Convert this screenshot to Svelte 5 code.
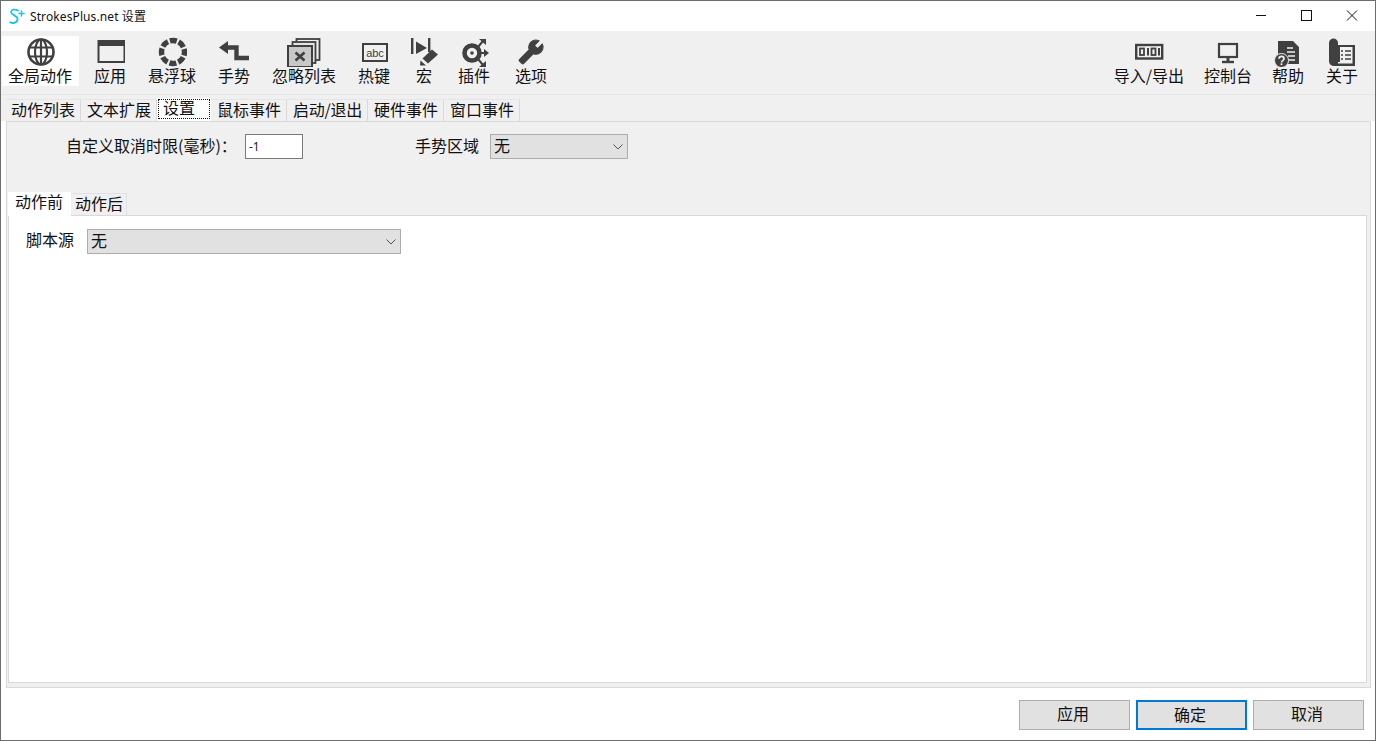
<script>
	const outerTabs = ["动作列表", "文本扩展", "设置", "鼠标事件", "启动/退出", "硬件事件", "窗口事件"];
	const innerTabs = ["动作前", "动作后"];
</script>

<div class="window">
	<header class="titlebar">
		<svg class="logo" width="16" height="17" viewBox="0 0 16 17" fill="none" stroke="#1fc4ea" stroke-width="1.8" stroke-linecap="round">
			<path d="M9 2.500C6 .8 2.200 1.600 2 4.200c-.2 2.600 6.600 3.400 6.600 6.800 0 3.400-4.600 5-7.400 3.200" />
			<path d="M12.500 3v5M10 5.500h5" stroke-width="1.500" />
		</svg>
		<span class="title">StrokesPlus.net 设置</span>
		<div class="winbtns">
			<svg width="46" height="30" viewBox="0 0 46 30" stroke="#111" fill="none"><path d="M19 14.500h10" /></svg>
			<svg width="46" height="30" viewBox="0 0 46 30" stroke="#111" fill="none"><rect x="18.500" y="9.500" width="10" height="10" /></svg>
			<svg width="46" height="30" viewBox="0 0 46 30" stroke="#111" fill="none"><path d="M18 9.500l10 10M28 9.500l-10 10" /></svg>
		</div>
	</header>

	<nav class="toolbar">
		<div class="tool active">
			<svg width="30" height="30" viewBox="-1 0 30 30" fill="none" stroke="#404040">
				<circle cx="15" cy="15" r="12.500" stroke-width="2.600" />
				<ellipse cx="15" cy="15" rx="6" ry="12.500" stroke-width="2.200" />
				<path d="M15 3v24M3 10.500h24M3 19.500h24" stroke-width="2.200" />
			</svg>
			<span>全局动作</span>
		</div>
		<div class="tool">
			<svg width="30" height="30" viewBox="-1 0 30 30" fill="none" stroke="#404040">
				<rect x="2.500" y="4" width="26" height="21" stroke-width="2" />
				<rect x="2" y="3" width="27" height="6" fill="#404040" stroke="none" />
			</svg>
			<span>应用</span>
		</div>
		<div class="tool">
			<svg width="30" height="30" viewBox="-1 0 30 30" fill="none" stroke="#404040">
				<circle cx="15" cy="15" r="11.500" stroke-width="5.400" stroke-dasharray="7 2.030" stroke-dashoffset="3.500" />
			</svg>
			<span>悬浮球</span>
		</div>
		<div class="tool">
			<svg width="32" height="30" viewBox="0 0 32 30" fill="none" stroke="#404040">
				<path d="M7 10.500h11.500V21H31" stroke-width="4.400" />
				<path d="M1 10.500L10 4v13z" fill="#404040" stroke="none" />
			</svg>
			<span>手势</span>
		</div>
		<div class="tool">
			<svg width="36" height="30" viewBox="0 0 36 30" stroke="#404040" stroke-width="1.800" fill="#d0d0d0">
				<rect x="10.500" y="2" width="23" height="21" fill="none" />
				<rect x="6.500" y="5" width="23" height="21" fill="#e4e4e4" />
				<rect x="2" y="9" width="24" height="21" fill="#c8c8c8" stroke-width="2" />
				<path d="M9.500 15.500l9 8M18.500 15.500l-9 8" stroke-width="2.600" />
			</svg>
			<span>忽略列表</span>
		</div>
		<div class="tool">
			<svg width="30" height="30" viewBox="0 0 30 30" fill="none" stroke="#404040">
				<rect x="4" y="7" width="24" height="17" stroke-width="2" />
				<text x="16" y="19.500" text-anchor="middle" class="abc">abc</text>
			</svg>
			<span>热键</span>
		</div>
		<div class="tool macro">
			<svg width="30" height="30" viewBox="0 0 30 30" fill="#404040">
				<rect x="2" y="1" width="2.400" height="16" />
				<path d="M7 4.500L18 11 7 17z" />
				<rect x="19" y="1" width="2.400" height="14" />
				<path d="M23 12.500l6 5-10 9-5.500-5z" />
				<path d="M11.500 23.500l5.500 5H11z" />
			</svg>
			<span>宏</span>
		</div>
		<div class="tool">
			<svg width="30" height="30" viewBox="0 0 30 30" fill="none" stroke="#404040">
				<circle cx="13" cy="16" r="7.500" stroke-width="4.600" />
				<circle cx="13" cy="16" r="1.800" fill="#404040" stroke="none" />
				<path d="M19 10l5-6M22 16h6M19 22l5 6" stroke-width="2" />
				<path d="M20 2h7v6zM25 12l5 4-5 4zM20 30h7v-6z" fill="#404040" stroke="none" />
			</svg>
			<span>插件</span>
		</div>
		<div class="tool options">
			<svg width="26" height="26" viewBox="0 0 24 24" fill="#404040" stroke="#404040" stroke-width="1">
				<path transform="translate(24 0) scale(-1 1)" d="M22.700 19l-9.100-9.100c.9-2.300.4-5-1.500-6.900-2-2-5-2.400-7.400-1.300L9 6 6 9 1.600 4.700C.4 7.100.9 10.100 2.900 12.100c1.900 1.900 4.600 2.400 6.900 1.500l9.100 9.100c.4.400 1 .4 1.400 0l2.300-2.300c.5-.4.5-1.100.1-1.400z" />
			</svg>
			<span>选项</span>
		</div>

		<div class="spacer"></div>

		<div class="tool tight">
			<svg width="32" height="30" viewBox="0 0 32 30" fill="none" stroke="#404040">
				<rect x="3.200" y="8" width="26" height="13.500" stroke-width="2.400" />
				<rect x="7" y="11.500" width="4" height="6.500" stroke-width="1.800" />
				<rect x="14" y="11" width="2" height="7.500" fill="#404040" stroke="none" />
				<rect x="18.500" y="11.500" width="4" height="6.500" stroke-width="1.800" />
				<rect x="25" y="11" width="2" height="7.500" fill="#404040" stroke="none" />
			</svg>
			<span>导入/导出</span>
		</div>
		<div class="tool tight">
			<svg width="30" height="30" viewBox="0 0 30 30" fill="none" stroke="#404040">
				<rect x="6" y="7" width="18" height="13" stroke-width="2.200" />
				<path d="M15 21v4" stroke-width="3" />
				<path d="M9 25h12" stroke-width="2.400" />
			</svg>
			<span>控制台</span>
		</div>
		<div class="tool tight">
			<svg width="30" height="30" viewBox="0 0 30 30" fill="#404040">
				<path d="M5 4h15l6 6v17H12V18H5z" />
				<path d="M14 11h6M14 15h8M15 19h7M15 23h7" stroke="#f0f0f0" stroke-width="1.600" />
				<circle cx="8.500" cy="23.500" r="7" stroke="#f0f0f0" stroke-width="1" />
				<path d="M6 21.800c0-3.200 5-3.200 5 0 0 1.900-2.500 1.800-2.500 3.600" fill="none" stroke="#f0f0f0" stroke-width="1.700" />
				<rect x="7.600" y="26.300" width="1.800" height="1.800" fill="#f0f0f0" />
			</svg>
			<span>帮助</span>
		</div>
		<div class="tool tight last">
			<svg width="30" height="30" viewBox="0 0 30 30" fill="none" stroke="#404040">
				<path d="M2 6c0-6 9-6 9 0v2h17v21H8c-4 0-6-2-6-5z" fill="#404040" stroke="none" />
				<path d="M11 10h15v17H11z" fill="#f0f0f0" stroke="none" />
				<path d="M12 9v16M26.500 9v18.500H8" stroke-width="2" />
				<path d="M14 14h2M18 14h6M14 18h2M18 18h6M14 22h2M18 22h6" stroke-width="1.600" />
			</svg>
			<span>关于</span>
		</div>
	</nav>

	<div class="tabstrip">
		{#each outerTabs as tab}
			<div class="tab" class:selected={tab === "设置"} class:narrow={tab.includes("/")}>
				<span>{tab}</span>
			</div>
		{/each}
	</div>

	<main class="panel">
		<div class="fields">
			<label class="timeout" for="timeout">自定义取消时限(毫秒)：</label>
			<input id="timeout" class="textbox" value="-1" />
			<span class="area-label">手势区域</span>
			<div class="combo small">
				<span>无</span>
				<svg width="10" height="6" viewBox="0 0 10 6" fill="none" stroke="#555"><path d="M.5.500L5 5 9.500.500" /></svg>
			</div>
		</div>

		<div class="subtabs">
			{#each innerTabs as tab}
				<div class="subtab" class:selected={tab === "动作前"}>{tab}</div>
			{/each}
		</div>
		<section class="subpanel">
			<span class="source-label">脚本源</span>
			<div class="combo wide">
				<span>无</span>
				<svg width="10" height="6" viewBox="0 0 10 6" fill="none" stroke="#555"><path d="M.5.500L5 5 9.500.500" /></svg>
			</div>
		</section>
	</main>

	<footer class="footer">
		<button>应用</button>
		<button class="default">确定</button>
		<button>取消</button>
	</footer>
</div>

<style>
	:global(body) {
		margin: 0;
		background: #fff;
	}

	.window {
		box-sizing: border-box;
		display: flex;
		flex-direction: column;
		width: 1376px;
		height: 741px;
		border: 1px solid #6d6d6d;
		background: #fff;
		font-family: "Noto Sans CJK SC", "Noto Sans", sans-serif;
		font-size: 16px;
		color: #111;
		overflow: hidden;
	}

	.titlebar {
		display: flex;
		align-items: center;
		height: 30px;
		flex: none;
		padding-left: 8px;
		background: #fff;
	}

	.logo {
		margin-right: 5px;
	}

	.title {
		font-family: "Noto Sans", "Noto Sans CJK SC", sans-serif;
		font-size: 12px;
		letter-spacing: 0.1px;
	}

	.winbtns {
		display: flex;
		margin-left: auto;
	}

	.toolbar {
		display: flex;
		flex: none;
		box-sizing: border-box;
		height: 64px;
		gap: 8px;
		padding: 5px 0 0 0;
		background: #f0f0f0;
		border-bottom: 1px solid #e4e4e4;
	}

	.tool {
		display: flex;
		flex-direction: column;
		align-items: center;
		height: 50px;
		min-width: 24px;
		padding: 0 7px;
	}

	.tool svg {
		flex: none;
		margin-top: 1px;
	}

	.tool span {
		line-height: 17px;
		white-space: nowrap;
	}

	.tool.active {
		margin-left: 1px;
		padding-left: 6px;
		background: #fff;
	}

	.macro svg {
		margin-left: -3px;
		margin-right: -3px;
	}

	.options {
		margin-left: 3px;
	}

	.tool.options svg {
		margin-top: 3px;
		margin-bottom: 2px;
	}

	.spacer {
		flex: 1;
	}

	.tool.tight {
		padding: 0;
		margin-left: 12px;
	}

	.tool.last {
		margin-left: 14px;
		margin-right: 17px;
	}

	.tabstrip {
		display: flex;
		flex: none;
		align-items: flex-end;
		height: 26px;
		padding-left: 4px;
		background: #f0f0f0;
	}

	.tab {
		box-sizing: border-box;
		height: 22px;
		padding: 0 5px 0 6px;
		line-height: 19px;
		border-right: 1px solid #d9d9d9;
		border-top: 1px solid #e6e6e6;
		white-space: nowrap;
	}

	.tab.narrow {
		letter-spacing: -0.25px;
	}

	.tab.selected {
		height: 24px;
		margin-bottom: -1px;
		padding: 1px;
		background: #fff;
		border: none;
	}

	.tab.selected span {
		display: block;
		box-sizing: border-box;
		width: 52px;
		height: 20px;
		padding-left: 4px;
		line-height: 15px;
		border: 1px dotted #111;
	}

	.panel {
		flex: 1;
		display: flex;
		flex-direction: column;
		box-sizing: border-box;
		margin: 0 4px 0 5px;
		padding: 12px 3px 4px 1px;
		background: #f0f0f0;
		border: 1px solid #d9d9d9;
	}

	.fields {
		display: flex;
		align-items: flex-start;
		flex: none;
		height: 25px;
		padding-left: 58px;
	}

	.timeout {
		width: 179px;
		white-space: nowrap;
		line-height: 23px;
	}

	.textbox {
		box-sizing: border-box;
		width: 58px;
		height: 25px;
		padding: 0 3px;
		border: 1px solid #7a7a7a;
		background: #fff;
		font-family: "Noto Sans", sans-serif;
		font-size: 12px;
		color: #222;
		outline: none;
	}

	.area-label {
		margin-left: 112px;
		margin-right: 11px;
		line-height: 23px;
	}

	.combo {
		display: flex;
		align-items: center;
		justify-content: space-between;
		box-sizing: border-box;
		height: 25px;
		padding: 0 4px 0 3px;
		background: #e1e1e1;
		border: 1px solid #adadad;
	}

	.combo span {
		line-height: 20px;
		margin-bottom: 3px;
	}

	.combo.small {
		width: 138px;
	}

	.combo.wide {
		width: 314px;
	}

	.subtabs {
		display: flex;
		align-items: flex-end;
		flex: none;
		height: 24px;
		margin-top: 32px;
	}

	.subtab {
		box-sizing: border-box;
		height: 22px;
		padding: 0 3px 0 4px;
		line-height: 19px;
		border-top: 1px solid #e2e2e2;
		border-right: 1px solid #e2e2e2;
	}

	.subtab.selected {
		height: 24px;
		margin-bottom: -1px;
		padding: 0 8px 0 7px;
		background: #fff;
		border: none;
		position: relative;
	}

	.subpanel {
		flex: 1;
		display: flex;
		align-items: flex-start;
		gap: 13px;
		padding: 13px 0 0 17px;
		background: #fff;
		border: 1px solid #d9d9d9;
	}

	.source-label {
		line-height: 20px;
	}

	.footer {
		display: flex;
		flex: none;
		justify-content: flex-end;
		gap: 6px;
		box-sizing: border-box;
		height: 52px;
		padding: 12px 11px 0 0;
		background: #fff;
	}

	button {
		box-sizing: border-box;
		width: 111px;
		height: 30px;
		padding: 0 3px 4px 0;
		background: #e1e1e1;
		border: 1px solid #adadad;
		border-radius: 0;
		font-family: inherit;
		font-size: 16px;
		color: #111;
	}

	button.default {
		border: 2px solid #0078d7;
	}

	.abc {
		font-family: "Liberation Sans", sans-serif;
		font-size: 11px;
		fill: #404040;
		stroke: none;
	}
</style>
